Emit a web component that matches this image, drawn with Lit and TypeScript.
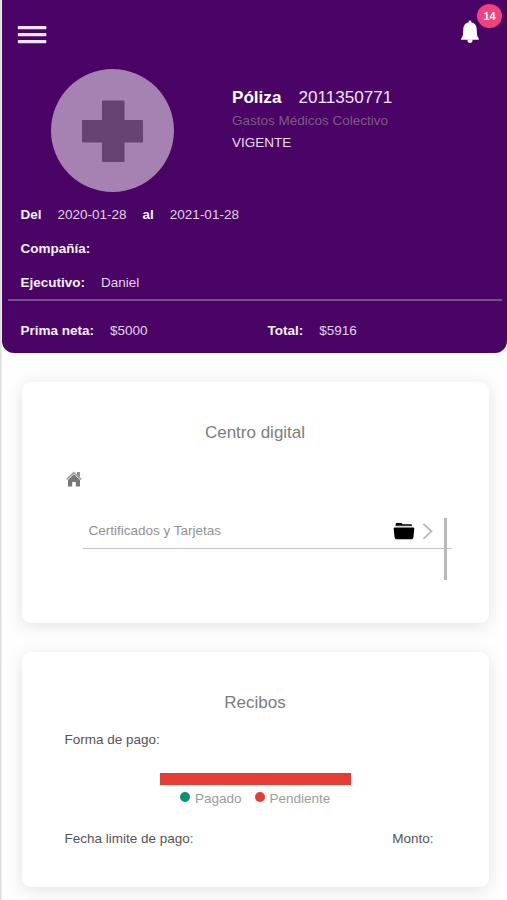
import { LitElement, html, css, svg } from "lit";
import { customElement, property } from "lit/decorators.js";

const menuIcon = svg`<svg class="menu" viewBox="0 0 30 20" width="30" height="20">
  <rect x="0.8" y="1" width="28.6" height="3.2" rx="0.8"/>
  <rect x="0.8" y="8" width="28.6" height="3.2" rx="0.8"/>
  <rect x="0.8" y="15" width="28.6" height="3.2" rx="0.8"/>
</svg>`;

const bellIcon = svg`<svg class="bell" viewBox="0 0 20 24" width="20" height="24">
  <path d="M10 .4c-.9 0-1.400.6-1.400 1.500v.7C5 3.300 3.500 5.700 3.300 9.200l-.3 4.600c-.1 2-.8 3.500-1.800 4.500v1.500h17.600v-1.500c-1-1-1.700-2.500-1.800-4.500l-.3-4.600C16.500 5.700 15 3.300 11.400 2.600v-.7C11.400 1 10.900.4 10 .4z"/>
  <path d="M7.500 19.500h5v1.500c-.3 1.200-1.200 1.900-2.500 1.900s-2.200-.7-2.500-1.900z"/>
</svg>`;

const crossIcon = svg`<svg viewBox="0 0 62 62" width="62" height="62">
  <path d="M21 .5h20.500a1 1 0 0 1 1 1V20H60a1 1 0 0 1 1 1v20.500a1 1 0 0 1-1 1H42.500V61a1 1 0 0 1-1 1H21a1 1 0 0 1-1-1V42.500H1a1 1 0 0 1-1-1V21a1 1 0 0 1 1-1H20V1.500a1 1 0 0 1 1-1z"/>
</svg>`;

const homeIcon = svg`<svg class="home" viewBox="0 0 16 16" width="16" height="16">
  <path d="M7.900 3.200 14 9v6.400H9.800V11H6.200v4.400H2V9z"/>
  <path class="roof" d="M.6 8.500 7.900 1.500l7.300 7"/>
  <path class="stack" d="M11 1h2.900v5.500L11 3.400z"/>
</svg>`;

const folderIcon = svg`<svg class="folder" viewBox="0 0 22 18" width="22" height="18">
  <path d="M2.700 1.900Q2.700 1 3.600 1h4.600q.8 0 1.100.8l.2.400h8.500q1 0 1 .9v1H2.700z"/>
  <path d="M1.800 5.600h18.400q1.200 0 1.100 1.200l-.9 8.700q-.2 1.700-1.800 1.700H3.400q-1.600 0-1.800-1.700L.7 6.800q-.1-1.200 1.100-1.200z"/>
  <path class="edge" d="M2.500 3.900h17"/>
</svg>`;

const chevronIcon = svg`<svg class="chevron" viewBox="0 0 11 18" width="11" height="18">
  <path d="M1.400 1.800 9.500 9.300l-8.100 7.500"/>
</svg>`;

@customElement("policy-field")
export class PolicyField extends LitElement {
  @property() label = "";
  @property() value = "";

  static styles = css`
    :host { display: flex; gap: 16px; white-space: pre; }
    .label { font-weight: 700; color: #f6effa; }
    .value { color: #e2d3ea; }
  `;

  render() {
    return html`<span class="label">${this.label}</span><span class="value">${this.value}</span>`;
  }
}

@customElement("info-card")
export class InfoCard extends LitElement {
  @property() heading = "";

  static styles = css`
    :host {
      display: block;
      box-sizing: border-box;
      padding: 40px 43px 0;
      background: #fff;
      border-radius: 9px;
      box-shadow: 0 3px 18px rgba(0, 0, 0, 0.11);
    }
    .heading {
      margin: 0;
      font-size: 17px;
      line-height: 22px;
      font-weight: 400;
      text-align: center;
      color: #7d7d7d;
    }
  `;

  render() {
    return html`<h2 class="heading">${this.heading}</h2><slot></slot>`;
  }
}

@customElement("app-root")
export class AppRoot extends LitElement {
  static styles = css`
    :host {
      display: block;
      box-sizing: border-box;
      height: 900px;
      overflow: hidden;
      padding-left: 2px;
      background: linear-gradient(90deg, #dedede 0 1px, #eeeeee 1px 2px, #fefefe 2px);
      font: 13.5px/18px "Liberation Sans", Arial, sans-serif;
      color: #555;
    }
    svg { display: block; }
    .header {
      box-sizing: border-box;
      height: 353px;
      background: #4a0466;
      border-radius: 0 0 12px 12px;
      color: #fff;
    }
    .topbar {
      display: flex;
      justify-content: space-between;
      align-items: flex-start;
      box-sizing: border-box;
      height: 69px;
      padding: 20px 27px 0 15px;
    }
    .menu { margin-top: 5px; fill: #efe5f4; }
    .alerts { position: relative; }
    .bell { fill: #fff; }
    .badge {
      position: absolute;
      left: 17px;
      top: -16px;
      width: 25px;
      height: 24px;
      border-radius: 50%;
      background: #f0427f;
      color: #fff;
      font-size: 11px;
      line-height: 24px;
      font-weight: 700;
      text-align: center;
    }
    .hero { display: flex; gap: 58px; padding-left: 49px; }
    .avatar {
      display: grid;
      place-items: center;
      width: 123px;
      height: 123px;
      border-radius: 50%;
      background: #a682b3;
      fill: #654372;
    }
    .policy { padding-top: 18px; }
    .number { display: flex; gap: 17px; font-size: 17.1px; line-height: 22px; }
    .number b { color: #fff; }
    .number span { color: #efe4f4; }
    .plan { margin-top: 3px; color: #7b5a83; }
    .status { margin-top: 4px; color: #e8dbef; }
    .details { display: grid; row-gap: 16px; padding: 14px 18px 0 18.5px; }
    .period { display: flex; gap: 16px; }
    .rule { height: 2px; margin: 7px 5px 0 6px; background: #76508a; }
    .totals { display: grid; grid-template-columns: 247px 1fr; padding: 21px 18px 0 18.5px; }
    .cards { display: grid; row-gap: 29px; padding: 29px 18.5px 0 19.5px; }
    .digital { height: 241px; }
    .receipts { height: 235px; }
    .home { margin: 27px 0 0 1.5px; fill: #777; }
    .roof { fill: none; stroke: #999; stroke-width: 1.5; }
    .stack { fill: #8a8a8a; }
    .list {
      display: flex;
      align-items: flex-start;
      height: 62px;
      margin: 31px -6px 0 18px;
    }
    .entry {
      display: flex;
      align-items: center;
      flex: 1;
      box-sizing: border-box;
      height: 31px;
      margin-right: -8px;
      padding: 0 19px 4px 6px;
      border-bottom: 1px solid #c4c4c4;
      color: #929292;
    }
    .entry span { flex: 1; }
    .folder { margin-right: 7px; fill: #000; }
    .edge { stroke: #888; stroke-width: 0.7; }
    .chevron { fill: none; stroke: #bababa; stroke-width: 1.8; }
    .scroll { width: 3px; height: 62px; margin-right: 5px; background: #b9b9b9; }
    .method { margin-top: 17px; }
    .bar { width: 191px; height: 12px; margin: 24px 0 0 95px; background: #e53c33; }
    .legend { display: flex; gap: 13px; margin: 5px 0 0 115.5px; color: #9c9c9c; }
    .key { display: flex; gap: 5px; }
    .dot { width: 10px; height: 10px; margin-top: 2px; border-radius: 50%; }
    .paid { background: #06936f; }
    .due { background: #e53c33; }
    .limits { display: flex; justify-content: space-between; margin: 22px 12px 0 0; }
  `;

  render() {
    return html`
      <header class="header">
        <div class="topbar">
          ${menuIcon}
          <div class="alerts">${bellIcon}<span class="badge">14</span></div>
        </div>
        <div class="hero">
          <div class="avatar">${crossIcon}</div>
          <div class="policy">
            <div class="number"><b>Póliza</b><span>2011350771</span></div>
            <div class="plan">Gastos Médicos Colectivo</div>
            <div class="status">VIGENTE</div>
          </div>
        </div>
        <div class="details">
          <div class="period">
            <policy-field label="Del" value="2020-01-28"></policy-field>
            <policy-field label="al" value="2021-01-28"></policy-field>
          </div>
          <policy-field label="Compañía:"></policy-field>
          <policy-field label="Ejecutivo:" value="Daniel"></policy-field>
        </div>
        <div class="rule"></div>
        <div class="totals">
          <policy-field label="Prima neta:" value="$5000"></policy-field>
          <policy-field label="Total:" value="$5916"></policy-field>
        </div>
      </header>
      <main class="cards">
        <info-card class="digital" heading="Centro digital">
          ${homeIcon}
          <div class="list">
            <div class="entry"><span>Certificados y Tarjetas</span>${folderIcon}${chevronIcon}</div>
            <div class="scroll"></div>
          </div>
        </info-card>
        <info-card class="receipts" heading="Recibos">
          <div class="method">Forma de pago:</div>
          <div class="bar"></div>
          <div class="legend">
            <div class="key"><i class="dot paid"></i>Pagado</div>
            <div class="key"><i class="dot due"></i>Pendiente</div>
          </div>
          <div class="limits"><span>Fecha limite de pago:</span><span>Monto:</span></div>
        </info-card>
      </main>
    `;
  }
}
